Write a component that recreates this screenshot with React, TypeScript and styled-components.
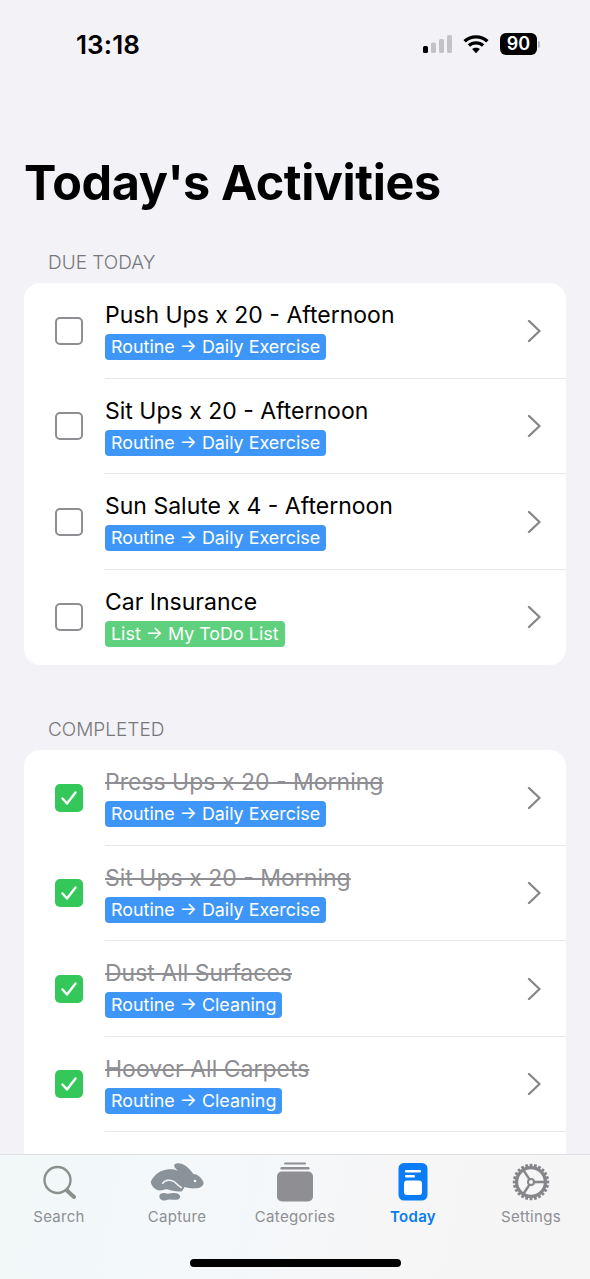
import React from 'react';
import styled, { createGlobalStyle } from 'styled-components';

const SF = `Inter, "Liberation Sans", sans-serif`;

const GlobalStyle = createGlobalStyle`
  html, body {
    margin: 0;
    padding: 0;
    height: 1279px;
    overflow: hidden;
    background: #f2f2f7;
    font-family: ${SF};
  }
`;

type Task = { title: string; kind: string; tone: 'blue' | 'green' };

const dueToday: Task[] = [
  { title: 'Push Ups x 20 - Afternoon', kind: 'Routine → Daily Exercise', tone: 'blue' },
  { title: 'Sit Ups x 20 - Afternoon', kind: 'Routine → Daily Exercise', tone: 'blue' },
  { title: 'Sun Salute x 4 - Afternoon', kind: 'Routine → Daily Exercise', tone: 'blue' },
  { title: 'Car Insurance', kind: 'List → My ToDo List', tone: 'green' },
];

const completed: Task[] = [
  { title: 'Press Ups x 20 - Morning', kind: 'Routine → Daily Exercise', tone: 'blue' },
  { title: 'Sit Ups x 20 - Morning', kind: 'Routine → Daily Exercise', tone: 'blue' },
  { title: 'Dust All Surfaces', kind: 'Routine → Cleaning', tone: 'blue' },
  { title: 'Hoover All Carpets', kind: 'Routine → Cleaning', tone: 'blue' },
];

const Screen = styled.div`
  width: 590px;
  height: 1279px;
  overflow: hidden;
  position: relative;
  background: #f2f2f7;
`;

const StatusBar = styled.div`
  height: 88px;
  display: flex;
  align-items: center;
  justify-content: space-between;
  padding: 0 50px 0 76px;
  box-sizing: border-box;
`;

const Clock = styled.span`
  font-size: 26px;
  font-weight: 600;
  color: #000;
  letter-spacing: 0.1px;
`;

const StatusIcons = styled.div`
  display: flex;
  align-items: center;
  gap: 11px;
`;

const Battery = styled.div`
  display: flex;
  align-items: center;
  gap: 1px;
`;

const BatteryBody = styled.span`
  width: 37px;
  height: 22px;
  border-radius: 6px;
  background: #000;
  color: #fff;
  font-size: 18px;
  font-weight: 600;
  line-height: 22px;
  text-align: center;
`;

const BatteryCap = styled.span`
  width: 2px;
  height: 7px;
  border-radius: 0 2px 2px 0;
  background: #b9b9bd;
`;

const Title = styled.h1`
  margin: 0;
  padding: 64px 0 0 24px;
  font-size: 48.5px;
  line-height: 62px;
  font-weight: 700;
  color: #000;
  letter-spacing: -0.4px;
`;

const SectionLabel = styled.div<{ $top: number }>`
  margin-top: ${(p) => p.$top}px;
  padding-left: 48px;
  height: 24px;
  line-height: 24px;
  font-size: 19px;
  font-weight: 300;
  color: #77777c;
  margin-bottom: 8px;
`;

const Card = styled.div<{ $open?: boolean }>`
  margin: 0 24px;
  background: #fff;
  border-radius: 16px;
  overflow: hidden;
  padding-bottom: ${(p) => (p.$open ? '120px' : '0')};
`;

const Row = styled.div`
  height: 95.5px;
  display: flex;
  align-items: center;
`;

const CheckCell = styled.div`
  width: 81px;
  padding-left: 31px;
  box-sizing: border-box;
  flex: none;
  display: flex;
`;

const EmptyBox = styled.div`
  width: 24px;
  height: 24px;
  border: 2px solid #8e8e93;
  border-radius: 5px;
`;

const DoneBox = styled.div`
  width: 28px;
  height: 28px;
  border-radius: 5px;
  background: #34c759;
  display: flex;
  align-items: center;
  justify-content: center;
`;

const RowBody = styled.div<{ $last: boolean }>`
  flex: 1;
  align-self: stretch;
  display: flex;
  align-items: center;
  min-width: 0;
  box-shadow: ${(p) => (p.$last ? 'none' : 'inset 0 -1px 0 #e6e6e9')};
`;

const TextStack = styled.div`
  flex: 1;
  display: flex;
  flex-direction: column;
  align-items: flex-start;
  gap: 4px;
`;

const TaskTitle = styled.div<{ $done: boolean }>`
  font-size: 23px;
  line-height: 29px;
  color: ${(p) => (p.$done ? '#8e8e93' : '#000')};
  text-decoration: ${(p) => (p.$done ? 'line-through' : 'none')};
  text-decoration-thickness: 2px;
`;

const Tag = styled.div<{ $tone: 'blue' | 'green' }>`
  height: 26px;
  line-height: 26px;
  padding: 0 6px;
  border-radius: 4px;
  font-size: 17.9px;
  color: #fff;
  background: ${(p) => (p.$tone === 'blue' ? '#3e97f8' : '#5fd17e')};
`;

const Disclosure = styled.div`
  width: 41px;
  padding-left: 2px;
  box-sizing: border-box;
  flex: none;
  display: flex;
`;

const TabBar = styled.nav`
  position: absolute;
  left: 0;
  right: 0;
  bottom: 0;
  height: 125px;
  box-sizing: border-box;
  border-top: 1px solid #dedee0;
  background: linear-gradient(100deg, #f2f7f8 0%, #f4f8fb 35%, #f6f6f7 65%, #f5f5f6 100%);
  display: flex;
  padding: 7px 0 0 0;
`;

const TabItem = styled.div`
  width: 118px;
  display: flex;
  flex-direction: column;
  align-items: center;
`;

const TabGlyph = styled.div`
  height: 40px;
  display: flex;
  align-items: center;
  justify-content: center;
`;

const TabLabel = styled.span<{ $active?: boolean }>`
  margin-top: 5px;
  font-size: 15px;
  line-height: 20px;
  letter-spacing: 0.3px;
  color: ${(p) => (p.$active ? '#0a7cf0' : '#8e8e93')};
  font-weight: ${(p) => (p.$active ? 600 : 400)};
`;

const HomeIndicator = styled.div`
  position: absolute;
  left: 190px;
  bottom: 12px;
  width: 211px;
  height: 8px;
  border-radius: 4px;
  background: #000;
`;

const Signal = () => (
  <svg width="29" height="20" viewBox="0 0 29 20">
    <rect x="0" y="12" width="5" height="7" rx="1.5" fill="#000" />
    <rect x="8" y="8.5" width="5" height="10.5" rx="1.5" fill="#c3c3c7" />
    <rect x="16" y="5" width="5" height="14" rx="1.5" fill="#c3c3c7" />
    <rect x="24" y="1" width="5" height="18" rx="1.5" fill="#c3c3c7" />
  </svg>
);

const Wifi = () => (
  <svg width="26" height="20" viewBox="0 0 26 20" fill="none" stroke="#000" strokeWidth="3.4">
    <path d="M1.6 7.2C7.9 1.4 18.1 1.4 24.4 7.2" />
    <path d="M5.9 11.6C9.9 8 16.1 8 20.1 11.6" />
    <path d="M13 19.2l-3.9-4.1c2.2-1.8 5.6-1.8 7.8 0z" fill="#000" stroke="none" />
  </svg>
);

const Check = () => (
  <svg width="18" height="16" viewBox="0 0 18 16" fill="none" stroke="#fff" strokeWidth="2.4" strokeLinecap="round" strokeLinejoin="round">
    <path d="M2.5 8.5l4.5 5L15.5 2.5" />
  </svg>
);

const Chevron = () => (
  <svg width="14" height="24" viewBox="0 0 14 24" fill="none" stroke="#85858a" strokeWidth="2.3" strokeLinecap="round" strokeLinejoin="round">
    <path d="M2 2l10.5 10L2 22" />
  </svg>
);

const SearchIcon = () => (
  <svg width="33" height="34" viewBox="0 0 33 34" fill="none" stroke="#8b908d" strokeLinecap="round">
    <circle cx="14.5" cy="15" r="13" strokeWidth="2.4" />
    <path d="M24 25.5l7 6.5" strokeWidth="4" />
  </svg>
);

const RabbitIcon = () => (
  <svg width="54" height="40" viewBox="28 20 162 120">
    <path
      fill="#8a929a"
      d="M30 80C40 58 60 44 84 42C94 41 102 42 112 46C104 40 98 34 102 27C110 21 122 23 132 30C144 38 152 47 158 56C172 57 184 68 189 82C188 94 176 99 164 99C152 100 142 98 132 95L124 108C108 110 92 106 78 102C66 104 56 108 48 103C38 98 32 90 30 80Z"
    />
    <path fill="none" stroke="#f3f8fb" strokeWidth="4.5" strokeLinecap="round" d="M66 84C74 72 92 72 102 80C110 88 114 92 122 97" />
    <circle cx="163" cy="77" r="4" fill="#f3f8fb" />
    <path
      fill="#8a929a"
      d="M56 123C56 113 70 111 80 115C92 115 100 111 112 115C122 119 120 132 108 133C94 134 84 130 76 135C66 138 56 132 56 123Z"
    />
  </svg>
);

const CategoriesIcon = () => (
  <svg width="38" height="40" viewBox="0 0 38 40" fill="#8e8e93">
    <rect x="8" y="0.5" width="22" height="2" rx="1" />
    <rect x="4.5" y="5" width="29" height="2.4" rx="1.2" />
    <rect x="1" y="9.5" width="36" height="30" rx="5" />
  </svg>
);

const TodayIcon = () => (
  <svg width="30" height="38" viewBox="0 0 30 38">
    <rect x="0.5" y="0" width="29" height="37.5" rx="5.5" fill="#0a7cf7" />
    <rect x="7" y="7" width="16" height="2.4" rx="1" fill="#fff" />
    <rect x="7" y="12" width="10" height="2.4" rx="1" fill="#fff" />
    <rect x="6" y="17.5" width="18" height="14.5" rx="3" fill="#fff" />
  </svg>
);

const gearTeeth = Array.from({ length: 24 }, (_, i) => (i * 360) / 24);

const GearIcon = () => (
  <svg width="38" height="38" viewBox="0 0 38 38" fill="none" stroke="#85858a">
    {gearTeeth.map((deg) => (
      <rect key={deg} x="17.6" y="0.8" width="2.8" height="4.2" fill="#85858a" stroke="none" transform={`rotate(${deg} 19 19)`} />
    ))}
    <circle cx="19" cy="19" r="14.4" strokeWidth="3.2" />
    <circle cx="19" cy="19" r="3" strokeWidth="2" />
    <path d="M22 19h11M17.5 16.4L11 6.5M17.5 21.6L11 31.5" strokeWidth="2.4" />
  </svg>
);

const TaskRow = ({ task, done, last }: { task: Task; done: boolean; last: boolean }) => (
  <Row>
    <CheckCell>
      {done ? (
        <DoneBox>
          <Check />
        </DoneBox>
      ) : (
        <EmptyBox />
      )}
    </CheckCell>
    <RowBody $last={last}>
      <TextStack>
        <TaskTitle $done={done}>{task.title}</TaskTitle>
        <Tag $tone={task.tone}>{task.kind}</Tag>
      </TextStack>
      <Disclosure>
        <Chevron />
      </Disclosure>
    </RowBody>
  </Row>
);

const tabs = [
  { label: 'Search', icon: <SearchIcon /> },
  { label: 'Capture', icon: <RabbitIcon /> },
  { label: 'Categories', icon: <CategoriesIcon /> },
  { label: 'Today', icon: <TodayIcon />, active: true },
  { label: 'Settings', icon: <GearIcon /> },
];

export default function App() {
  return (
    <Screen>
      <GlobalStyle />
      <StatusBar>
        <Clock>13:18</Clock>
        <StatusIcons>
          <Signal />
          <Wifi />
          <Battery>
            <BatteryBody>90</BatteryBody>
            <BatteryCap />
          </Battery>
        </StatusIcons>
      </StatusBar>
      <Title>Today's Activities</Title>
      <SectionLabel $top={37}>DUE TODAY</SectionLabel>
      <Card>
        {dueToday.map((t, i) => (
          <TaskRow key={t.title} task={t} done={false} last={i === dueToday.length - 1} />
        ))}
      </Card>
      <SectionLabel $top={53}>COMPLETED</SectionLabel>
      <Card $open>
        {completed.map((t) => (
          <TaskRow key={t.title} task={t} done last={false} />
        ))}
      </Card>
      <TabBar>
        {tabs.map((t) => (
          <TabItem key={t.label}>
            <TabGlyph>{t.icon}</TabGlyph>
            <TabLabel $active={t.active}>{t.label}</TabLabel>
          </TabItem>
        ))}
      </TabBar>
      <HomeIndicator />
    </Screen>
  );
}
